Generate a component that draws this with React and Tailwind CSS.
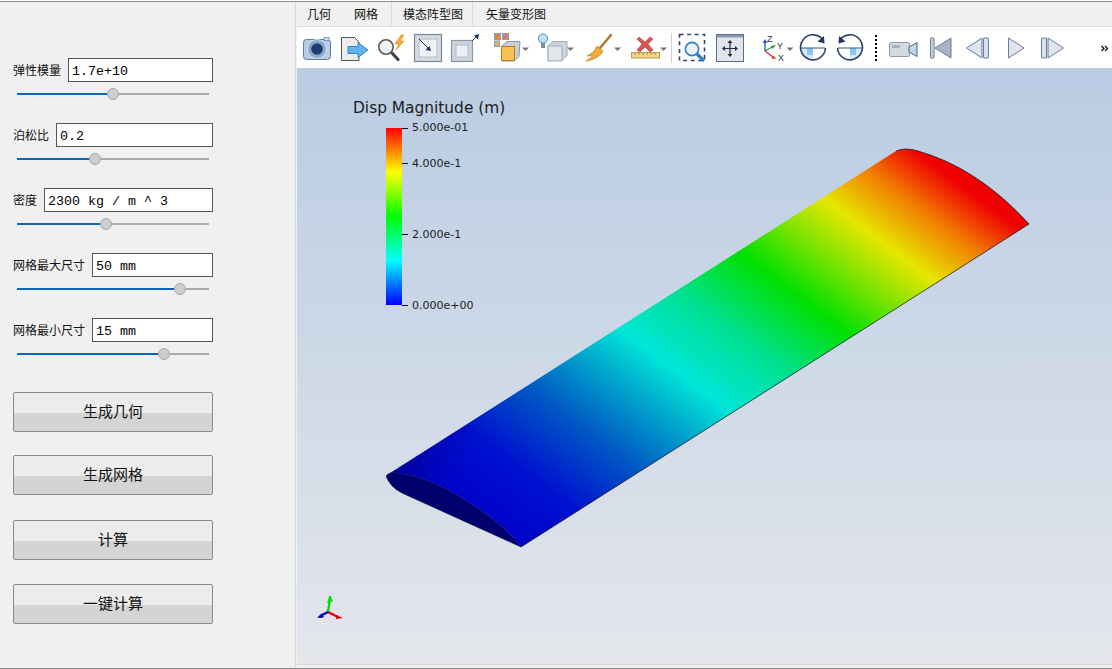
// App.jsx
import React from "react";

const CJK = "font-['Noto_Sans_CJK_SC','Liberation_Sans',sans-serif]";

const params = [
  { label: "弹性模量", value: "1.7e+10", thumb: 96 },
  { label: "泊松比", value: "0.2", thumb: 77.5 },
  { label: "密度", value: "2300 kg / m ^ 3", thumb: 89 },
  { label: "网格最大尺寸", value: "50 mm", thumb: 163 },
  { label: "网格最小尺寸", value: "15 mm", thumb: 147 },
];

function ParamRow({ label, value, thumb }) {
  return (
    <div className="flex flex-col">
      <div className="flex items-center gap-[7px] w-[200px] h-6">
        <span className="text-[12px] text-[#111] whitespace-nowrap -mt-[1px]">{label}</span>
        <input
          readOnly
          value={value}
          className="flex-1 min-w-0 h-6 border border-[#555] bg-white px-[3px] pt-[2px] text-[13.33px] text-black font-['Liberation_Mono',monospace] outline-none"
        />
      </div>
      <div className="relative ml-1 mt-[11px] w-[192px] h-[2px] bg-[#ababab]">
        <div className="h-full bg-[#0b66b5]" style={{ width: thumb }} />
        <div
          className="absolute -top-[5px] -ml-[6px] w-3 h-3 rounded-full bg-[#cdcdcd] border border-[#a8a8a8]"
          style={{ left: thumb }}
        />
      </div>
    </div>
  );
}

function ActionButton({ children, className }) {
  return (
    <button
      className={`w-[200px] h-10 pb-[2px] rounded-[2px] border border-[#8a8a8a] bg-[linear-gradient(#ececec_0,#ececec_52%,#d4d4d4_52%,#d4d4d4_100%)] text-[15px] text-[#111] ${className || ""}`}
    >
      {children}
    </button>
  );
}

// viewBox keeps page coordinates, so the shapes read straight off the screenshot
function Tool({ x, w, className, children }) {
  return (
    <svg width={w} height={41} viewBox={`${x} 27 ${w} 41`} className={`shrink-0 ${className || ""}`}>
      {children}
    </svg>
  );
}

const Caret = ({ x }) => <path d={`M${x - 3} 47.5h7l-3.5 3.5z`} fill="#777" />;

function Toolbar() {
  return (
    <div className="flex items-center h-[41px] bg-white pl-[2px] shrink-0">
      {/* camera */}
      <Tool x={299} w={36}>
        <rect x="303.5" y="39.5" width="27" height="20" rx="3" fill="#b9cce4" stroke="#5b7ca8" />
        <rect x="324" y="37.5" width="5" height="3" fill="#d5e0ee" stroke="#5b7ca8" strokeWidth=".7" />
        <circle cx="317" cy="49" r="9.5" fill="#8ea8c8" stroke="#d8e3f0" />
        <circle cx="317" cy="49" r="5.8" fill="#1d3a72" />
      </Tool>
      {/* export */}
      <Tool x={335} w={36}>
        <path d="M341.5 37.5h13l4.5 4.5v18.5h-17.5z" fill="#ececec" stroke="#555" />
        <path d="M348 46.5h10v-4l10 7.5-10 7.5v-4h-10z" fill="#5fb2ea" stroke="#2f86cc" />
      </Tool>
      {/* find data */}
      <Tool x={371} w={38}>
        <path d="M401 35l-6 9h4l-3 6 8-9h-4l4-6z" fill="#f2b038" stroke="#d18418" strokeWidth=".6" />
        <path d="M392 53l6 6.5" stroke="#444" strokeWidth="3.2" strokeLinecap="round" />
        <circle cx="386" cy="47" r="7.2" fill="#eef2f5" stroke="#555" strokeWidth="1.6" />
      </Tool>
      {/* reset zoom to box */}
      <Tool x={409} w={37}>
        <rect x="414.5" y="34.5" width="27" height="27" fill="#d5dbe3" stroke="#7a889c" strokeWidth="1.2" />
        <rect x="419" y="39" width="18" height="18" fill="#eef1f4" stroke="#b4bcc8" />
        <path d="M419 39l9 9" stroke="#22365c" strokeWidth="1" />
        <path d="M431 51l-5.5-1 4-4z" fill="#22365c" />
      </Tool>
      {/* zoom out box */}
      <Tool x={446} w={41}>
        <rect x="451.5" y="40.5" width="21" height="21" fill="#ccd3dc" stroke="#8b97a8" strokeWidth="1.2" />
        <rect x="456" y="45" width="12" height="12" fill="#eceff3" stroke="#b4bcc8" />
        <path d="M472 41l5-5" stroke="#22365c" strokeWidth="1" />
        <path d="M479 34l-1 5.5-4-4z" fill="#22365c" />
      </Tool>
      {/* blocks */}
      <Tool x={491} w={40} className="ml-[4px]">
        <rect x="494.5" y="33.5" width="6" height="6" fill="#e8883a" stroke="#7aa0c8" />
        <rect x="502.5" y="33.5" width="6" height="6" fill="#e07a7a" stroke="#7aa0c8" />
        <rect x="494.5" y="41" width="5" height="5.5" fill="#eeb050" stroke="#7aa0c8" />
        <path d="M502 46l5-4.5h13l-1 15-5 4.5h-12z" fill="#c7ced6" stroke="#8d97a3" />
        <rect x="501.5" y="46.5" width="13" height="14" fill="#f8c24e" stroke="#b77c1e" />
        <Caret x={525} />
      </Tool>
      {/* light + cube */}
      <Tool x={537} w={38} className="ml-[6px]">
        <circle cx="543" cy="38.5" r="4.6" fill="#bfe2fb" stroke="#4c8ac4" />
        <rect x="541" y="43" width="4" height="5" fill="#7f8ea3" />
        <path d="M548 46l5-4.5h14v14l-5 5h-14z" fill="#ced4db" stroke="#a0a9b4" />
        <path d="M548 46h14v15h-14z" fill="#e3e7eb" stroke="#a0a9b4" />
        <Caret x={570} />
      </Tool>
      {/* broom */}
      <Tool x={582} w={40} className="ml-[7px]">
        <path d="M611 35l-11 13" stroke="#a9772f" strokeWidth="2.4" strokeLinecap="round" />
        <path d="M597 46l6 5c-2 5-9 9-17 10 3-2 6-4 6-6-2 1-3 1-5 1 4-2 8-5 10-10z" fill="#f0ab3a" stroke="#c67d1c" strokeWidth=".7" />
        <Caret x={617} />
      </Tool>
      {/* clear / ruler */}
      <Tool x={628} w={40} className="ml-[6px]">
        <path d="M639 37l6 5 5-5 3 2-5 5 5 6-3 2-5-5-5 5-3-2 5-6-5-5z" fill="#d9534f" stroke="#a83a36" strokeWidth=".5" />
        <rect x="631.5" y="52.5" width="28" height="5.5" fill="#f1d489" stroke="#bb9a4a" />
        <path d="M635 53v2m4-2v2m4-2v2m4-2v2m4-2v2m4-2v2" stroke="#97793a" strokeWidth=".8" />
        <Caret x={663} />
      </Tool>
      <div className="ml-[3px] w-px h-[30px] bg-[#cfcfcf] shrink-0" />
      {/* zoom to box */}
      <Tool x={677} w={31} className="ml-[5px]">
        <rect x="679.5" y="34.5" width="25" height="26" fill="none" stroke="#2f4468" strokeWidth="1.6" strokeDasharray="4 3.6" />
        <path d="M697 54l7 7" stroke="#2f7fc4" strokeWidth="3.2" />
        <circle cx="692" cy="49" r="6.6" fill="#eef5fa" stroke="#2f7fc4" strokeWidth="1.6" />
      </Tool>
      {/* pan */}
      <Tool x={714} w={32} className="ml-[6px]">
        <rect x="716.5" y="34.5" width="27" height="27" fill="#e2e5ea" stroke="#5d6d88" strokeWidth="1" />
        <rect x="717" y="35" width="26" height="2.5" fill="#8a9ab2" />
        <path d="M730 42v13M723.5 48.5h13" stroke="#1f2d45" strokeWidth="1.2" />
        <path d="M730 40l2.5 3h-5zM730 57l2.5-3h-5zM722 48.5l3-2.5v5zM738 48.5l-3-2.5v5z" fill="#1f2d45" />
      </Tool>
      {/* orientation axes */}
      <Tool x={760} w={35} className="ml-[14px]">
        <path d="M765 51v-9" stroke="#2a5fc4" strokeWidth="1.4" />
        <path d="M765 39l2.5 4h-5z" fill="#2a5fc4" />
        <path d="M765 51l9-5" stroke="#2e9a3f" strokeWidth="1.4" />
        <path d="M776 45l-3.5 4-1.5-3z" fill="#2e9a3f" />
        <path d="M765 51l8 6" stroke="#e0342c" strokeWidth="1.4" />
        <path d="M776 59l-4.5-.5 1.8-3z" fill="#e0342c" />
        <text x="767" y="42" fontSize="9" fill="#333" fontFamily="Liberation Sans">Z</text>
        <text x="777" y="49" fontSize="9" fill="#333" fontFamily="Liberation Sans">Y</text>
        <text x="778" y="61" fontSize="9" fill="#333" fontFamily="Liberation Sans">X</text>
        <Caret x={789.5} />
      </Tool>
      {/* rotate cw */}
      <Tool x={799} w={28} className="ml-[4px]">
        <path d="M813 48h-12a12 12 0 0 0 12 12z" fill="#d5ebf8" />
        <path d="M807 48h6v7h-6z" fill="#8cc8ee" />
        <path d="M801 48h24" stroke="#2f5b80" strokeWidth="1" />
        <path d="M823.5 40.5A12.5 12.5 0 1 0 825.5 48" fill="none" stroke="#2f4468" strokeWidth="1.6" />
        <path d="M824 36l.5 7.5-7-2z" fill="#22365c" />
      </Tool>
      {/* rotate ccw */}
      <Tool x={836} w={28} className="ml-[9px]">
        <path d="M850 48h12a12 12 0 0 1-12 12z" fill="#d5ebf8" />
        <path d="M850 48h6v7h-6z" fill="#8cc8ee" />
        <path d="M838 48h24" stroke="#2f5b80" strokeWidth="1" />
        <path d="M839.5 40.5A12.5 12.5 0 1 1 837.5 48" fill="none" stroke="#2f4468" strokeWidth="1.6" />
        <path d="M839 36l-.5 7.5 7-2z" fill="#22365c" />
      </Tool>
      <div className="ml-[11px] mr-[1px] w-[2px] h-[26px] border-l-2 border-dotted border-black shrink-0" />
      {/* animation */}
      <Tool x={886} w={33} className="ml-[9px]">
        <rect x="888.5" y="42.5" width="20" height="14" rx="1.5" fill="#d4d9e0" stroke="#8d9bb0" />
        <rect x="891" y="45" width="8" height="3" fill="#a8b0bc" />
        <path d="M908 47l8-4.5v14l-8-4.5z" fill="#c3d6ea" stroke="#46648c" />
      </Tool>
      <Tool x={927} w={26} className="ml-[8px]">
        <rect x="929.5" y="38" width="3.6" height="20" rx=".5" fill="#c7d0dd" stroke="#6b7d9a" />
        <path d="M950 38v20l-16-10z" fill="#a9b4c4" stroke="#6b7d9a" />
      </Tool>
      <Tool x={963} w={27} className="ml-[10px]">
        <rect x="982.5" y="38" width="5" height="20" rx=".5" fill="#dbe2ec" stroke="#6b7d9a" />
        <path d="M981 38v20l-15.5-10z" fill="#dfe5ed" stroke="#6b7d9a" />
      </Tool>
      <Tool x={1005} w={21} className="ml-[15px]">
        <path d="M1007.5 38v20l15.5-10z" fill="#dfe5ed" stroke="#6b7d9a" />
      </Tool>
      <Tool x={1038} w={27} className="ml-[12px]">
        <rect x="1040.5" y="38" width="5" height="20" rx=".5" fill="#dbe2ec" stroke="#6b7d9a" />
        <path d="M1047 38v20l15.5-10z" fill="#dfe5ed" stroke="#6b7d9a" />
      </Tool>
      <Tool x={1098} w={12} className="ml-[33px]">
        <path d="M1100.5 46l2.5 2.5-2.5 2.5M1104 46l2.5 2.5-2.5 2.5" fill="none" stroke="#111" strokeWidth="1.3" />
      </Tool>
    </div>
  );
}

function Wing() {
  const top =
    "M387 475L896 151Q905 147 918 151Q978 168 1029 224L521 547Q505 525 470 503Q430 476 396 473Q390 472 387 475Z";
  return (
    <svg className="absolute inset-0 w-full h-full" viewBox="297 68 815 596">
      <defs>
        <linearGradient id="span" gradientUnits="userSpaceOnUse" x1="453" y1="511" x2="792.6" y2="58">
          <stop offset="0" stopColor="#0000c8" />
          <stop offset="0.13" stopColor="#0010d0" />
          <stop offset="0.256" stopColor="#0058c4" />
          <stop offset="0.36" stopColor="#00a8cc" />
          <stop offset="0.435" stopColor="#00e6d8" />
          <stop offset="0.55" stopColor="#00e090" />
          <stop offset="0.67" stopColor="#00e000" />
          <stop offset="0.76" stopColor="#80e400" />
          <stop offset="0.835" stopColor="#e6e600" />
          <stop offset="0.92" stopColor="#f08000" />
          <stop offset="1" stopColor="#f00000" />
        </linearGradient>
        <linearGradient id="chord" gradientUnits="userSpaceOnUse" x1="385" y1="476" x2="521" y2="547">
          <stop offset="0" stopColor="#000" stopOpacity="0.3" />
          <stop offset="0.18" stopColor="#000" stopOpacity="0.12" />
          <stop offset="0.42" stopColor="#000" stopOpacity="0" />
          <stop offset="1" stopColor="#000" stopOpacity="0" />
        </linearGradient>
      </defs>
      <path d="M386 476Q390 487 402 493L521 547Q505 525 470 503Q430 476 396 473Q389 472 386 476Z" fill="#00006e" stroke="#0a0a3c" strokeWidth=".6" />
      <path d={top} fill="url(#span)" />
      <path d={top} fill="url(#chord)" />
      <path d="M896 151Q905 147 918 151Q978 168 1029 224L521 547" fill="none" stroke="#101010" strokeWidth=".7" />
      {/* orientation triad */}
      <path d="M328 612L330 599" stroke="#00e000" strokeWidth="2.4" />
      <path d="M330 596l-2 7M330 596l2 6" stroke="#00e000" strokeWidth="1.6" />
      <path d="M328 612L338 617" stroke="#f00000" strokeWidth="2.4" />
      <path d="M343 618l-7-3v4z" fill="#e00000" />
      <path d="M328 612L320 616" stroke="#0000e0" strokeWidth="2.4" />
      <path d="M317 617.5l5-4 2 3.5-3 1z" fill="#0000c0" />
    </svg>
  );
}

function ScalarBar() {
  const ticks = [
    { text: "5.000e-01", y: 60, dy: 0 },
    { text: "4.000e-1", y: 95, dy: 2 },
    { text: "2.000e-1", y: 166, dy: 2 },
    { text: "0.000e+00", y: 237, dy: 2 },
  ];
  return (
    <>
      <div className="absolute left-[56px] top-[31px] text-[15.4px] leading-[18px] text-[#1c1c1c] font-['DejaVu_Sans',sans-serif] whitespace-nowrap">
        Disp Magnitude (m)
      </div>
      <div className="absolute left-[89px] top-[60px] w-4 h-[177px] bg-[linear-gradient(#ff0000,#ffff00_25%,#00ff00_50%,#00ffff_75%,#0000ff)]" />
      {ticks.map((t) => (
        <div key={t.text} className="absolute left-[105px] flex items-center h-4 -mt-2 gap-[4px]" style={{ top: t.y }}>
          <div className="w-[6px] h-px bg-[#111]" />
          <span className="text-[11px] text-[#1c1c1c] font-['DejaVu_Sans',sans-serif]" style={{ marginTop: t.dy }}>
            {t.text}
          </span>
        </div>
      ))}
    </>
  );
}

export default function App() {
  return (
    <div className={`w-[1112px] h-[669px] overflow-hidden bg-white pt-px ${CJK}`}>
      <div className="h-[668px] border-t border-b border-[#8a8a8a] bg-[#f0f0f0] flex">
        {/* left panel */}
        <div className="w-[296px] shrink-0 border-r border-[#d8d8d8] pl-[13px] flex flex-col">
          <div className="mt-[56px] flex flex-col gap-[28px]">
            {params.map((p) => (
              <ParamRow key={p.label} {...p} />
            ))}
          </div>
          <ActionButton className="mt-[37px]">生成几何</ActionButton>
          <ActionButton className="mt-[23px]">生成网格</ActionButton>
          <ActionButton className="mt-[25px]">计算</ActionButton>
          <ActionButton className="mt-[24px]">一键计算</ActionButton>
        </div>
        {/* right side */}
        <div className="flex-1 min-w-0 pl-px flex flex-col">
          <div className="flex h-[25px] items-center shrink-0 border-b border-[#dcdcdc] text-[12px] text-[#111]">
            <div className="flex h-full items-center gap-[23px] pl-[10px] pr-[13px] border-r border-[#dcdcdc]">
              <span>几何</span>
              <span>网格</span>
            </div>
            <div className="flex h-full items-center pl-[11px] pr-[9px] border-r border-[#dcdcdc]">模态阵型图</div>
            <div className="flex h-full items-center pl-[13px] pr-[12px]">矢量变形图</div>
          </div>
          <Toolbar />
          <div className="relative flex-1 mb-[3px] border-b border-[#d8d8d8] bg-[linear-gradient(#b9cce3,#e4e6eb)]">
            <Wing />
            <ScalarBar />
          </div>
        </div>
      </div>
    </div>
  );
}
